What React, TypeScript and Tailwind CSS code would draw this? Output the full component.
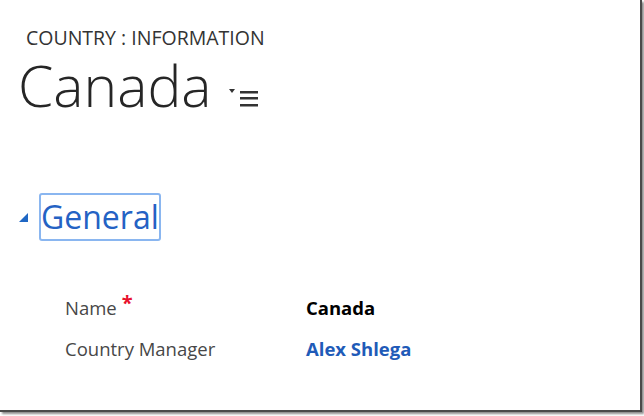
export default function App() {
  return (
    <div className="w-[644px] h-[416px] bg-white overflow-hidden" style={{ fontFamily: '"Open Sans", "Noto Sans", sans-serif' }}>
      <div className="w-[642px] h-[412px] bg-white border-r-2 border-b-2 border-[#4a4a4a] shadow-[2px_2px_2px_rgba(0,0,0,0.45)]">
        <div className="pl-[26px] pt-[25px]">
          <div className="text-[19.5px] leading-[26px] text-[#333333]">COUNTRY : INFORMATION</div>
          <div className="flex items-start -ml-[8px]">
            <h1 className="text-[57px] leading-[68px] font-light text-[#262626]">Canada</h1>
            <svg width="30" height="18" viewBox="0 0 30 18" className="ml-[17px] mt-[38px]">
              <polygon points="0,0 6,0 3,4" fill="#333" />
              <rect x="11" y="2" width="18" height="2.5" fill="#333" />
              <rect x="11" y="8" width="18" height="2.5" fill="#333" />
              <rect x="11" y="15" width="18" height="2.5" fill="#333" />
            </svg>
          </div>
        </div>

        <div className="flex items-center mt-[74px] pl-[19px]">
          <svg width="9" height="9" viewBox="0 0 9 9">
            <polygon points="9,0 9,9 0,9" fill="#1f67c4" />
          </svg>
          <div className="ml-[11px] border-2 border-[#8ab6f0] rounded-[3px] h-[48px] flex items-center">
            <span className="text-[32px] leading-[40px] text-[#2462c4]">General</span>
          </div>
        </div>

        <div className="mt-[55px] pl-[65px] grid grid-cols-[241px_auto] gap-y-[17px] text-[18.5px] leading-[24px]">
          <div className="text-[#474747] flex items-start">
            Name<span className="text-[#e8112d] font-bold ml-[5px] -mt-[5px] text-[20px] leading-[24px]">*</span>
          </div>
          <div className="font-bold text-black">Canada</div>
          <div className="text-[#474747]">Country Manager</div>
          <div className="font-bold text-[#1f5bb8]">Alex Shlega</div>
        </div>
      </div>
    </div>
  );
}
